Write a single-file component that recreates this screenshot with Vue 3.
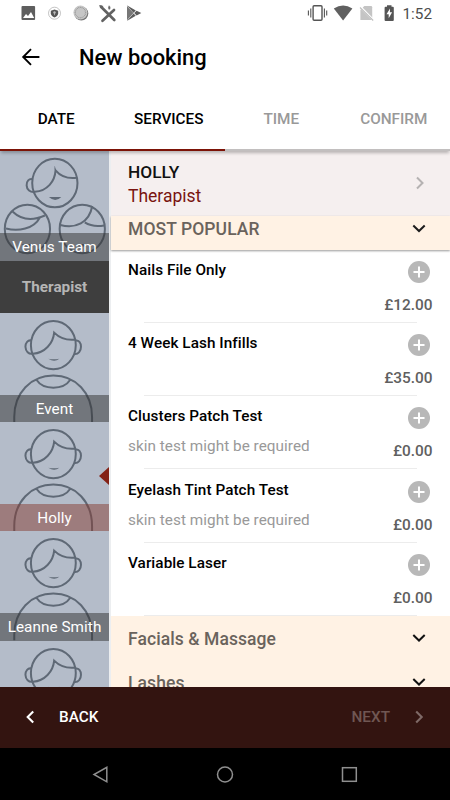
<script setup>
const tabs = [
  { label: 'DATE', done: true },
  { label: 'SERVICES', done: true },
  { label: 'TIME', done: false },
  { label: 'CONFIRM', done: false },
]

const staff = [
  { name: 'Event', selected: false },
  { name: 'Holly', selected: true },
  { name: 'Leanne Smith', selected: false },
  { name: '', selected: false },
]

const services = [
  { name: 'Nails File Only', note: '', price: '£12.00' },
  { name: '4 Week Lash Infills', note: '', price: '£35.00' },
  { name: 'Clusters Patch Test', note: 'skin test might be required', price: '£0.00' },
  { name: 'Eyelash Tint Patch Test', note: 'skin test might be required', price: '£0.00' },
  { name: 'Variable Laser', note: '', price: '£0.00' },
]

const categories = ['Facials & Massage', 'Lashes']
const rays = Array.from({ length: 20 }, (_, i) => i * 18)
</script>

<template>
  <div class="screen">
    <div class="status">
      <svg class="status-left" width="150" height="27" viewBox="0 0 150 27">
        <path d="M22.500 6h11.600a1 1 0 0 1 1 1v12a1 1 0 0 1-1 1H22.500a1 1 0 0 1-1-1V7a1 1 0 0 1 1-1z" fill="#5e5e5e" />
        <path d="M23 18l3-4 2 2 3-4 3.200 6z" fill="#fff" />
        <circle cx="54.500" cy="13.200" r="6" fill="#fff" stroke="#aaa" stroke-width=".7" />
        <path d="M54.500 9.500l3.700 1.300v2.500c0 2-1.500 3.300-3.700 4.200-2.200-.9-3.700-2.200-3.700-4.200v-2.500z" fill="#555" />
        <circle cx="54.500" cy="12.500" r="1.200" fill="#bbb" />
        <path d="M54.500 13v2.200" stroke="#bbb" stroke-width=".8" />
        <circle cx="81.300" cy="13.500" r="7" fill="#777" />
        <circle cx="80.400" cy="12.600" r="7" fill="#c6c6c6" />
        <path
          v-for="a in rays"
          :key="a"
          d="M80.400 6.800v1.200"
          stroke="#8c8c8c"
          stroke-width=".7"
          :transform="`rotate(${a} 80.400 12.600)`"
        />
        <path d="M101 6.800l13.300 13.200M114 10l-11.500 10.800" fill="none" stroke="#626262" stroke-width="2.700" stroke-linecap="round" />
        <path d="M99 5l4.500 1-2.500 2.500z" fill="#626262" />
        <path d="M109 5.200c2 1.500 2.300 3.300.2 4.800-1.700-1.300-1.500-3-.2-4.800z" fill="#686868" stroke="#fff" stroke-width=".4" />
        <path d="M127 6v14.200l6.500-7.100z" fill="#777" />
        <path d="M126.800 5.200l9 5.300-2.300 2.300zM126.800 20.900l9-5.200-2.300-2.300zM136.600 10.700l4.700 2.400-4.700 2.400-2.400-2.400z" fill="#5c5c5c" />
      </svg>
      <svg class="status-right" width="93" height="27" viewBox="307 0 93 27">
        <rect x="313.100" y="5.800" width="8.900" height="14.400" rx="1" fill="none" stroke="#555" stroke-width="1.400" />
        <path d="M308.400 10.500v5M310.800 8.500v9M324.400 8.500v9M326.700 10.500v5" stroke="#555" stroke-width="1.100" />
        <path d="M333.800 8.600q9.300-6.400 18.600 0L343.100 20.500z" fill="#606060" />
        <path d="M364.300 6H371a1.200 1.200 0 0 1 1.200 1.200V20h-11.800V10z" fill="#c4c4c4" />
        <path d="M359.500 6.200l14.200 14.300" stroke="#fff" stroke-width="2.400" />
        <path d="M360 7.500l13.200 13" stroke="#bdbdbd" stroke-width="1.100" />
        <path d="M387 5.300h4.500v1.500h1.300a1 1 0 0 1 1 1V20a1 1 0 0 1-1 1h-7.200a1 1 0 0 1-1-1V7.800a1 1 0 0 1 1-1H387z" fill="#555" />
        <path d="M390 8.500l-3.500 5.700h2.200v4l3.400-6h-2.200z" fill="#fff" />
      </svg>
      <span class="clock">1:52</span>
    </div>

    <header class="appbar">
      <svg width="20" height="20" viewBox="0 0 20 20">
        <path d="M11 2.200L3.200 10l7.800 7.800M3.200 10h16.200" fill="none" stroke="#000" stroke-width="1.900" />
      </svg>
      <h1>New booking</h1>
    </header>

    <nav class="tabs">
      <div v-for="t in tabs" :key="t.label" class="tab" :class="{ done: t.done }">{{ t.label }}</div>
    </nav>

    <main class="content">
      <aside class="sidebar">
        <div class="cell team">
          <svg class="portrait" viewBox="0 0 109.300 109.300">
            <ellipse cx="55" cy="32" rx="22.700" ry="24.300" />
            <path d="M33 28.300c-4-1.200-6.500 2-6.300 6 .2 4.500 3.500 7.200 8.300 6.500 12.500-.8 20-10.500 20.700-21.500 5.500 6.500 12.500 8.500 21 7.500" />
            <path class="mouth" d="M49 46h12.500q-6 6-12.500 0z" />
            <path d="M55.700 19.300l-1-4" stroke-width=".7" />
            <ellipse cx="27.500" cy="78" rx="22.700" ry="24.300" />
            <path d="M12.500 60.500q13 12.500 32.500 4M6 77.500c12 3.500 28 .5 34-11" />
            <ellipse cx="82.500" cy="78" rx="22.700" ry="24.300" />
            <path d="M60.500 74c15 4 29-2 32-19M85 71.500q8 5 19.500 3" />
            <path class="mouth" d="M21.500 93h12.500q-6 5.500-12.500 0zM76.500 93h12.500q-6 5.500-12.500 0z" />
          </svg>
          <div class="name">Venus Team</div>
        </div>
        <div class="group">Therapist</div>
        <div v-for="(s, i) in staff" :key="i" class="cell" :class="{ selected: s.selected }">
          <svg class="portrait" viewBox="0 0 109.300 109.300">
            <ellipse cx="53.500" cy="32" rx="22.500" ry="24.200" />
            <path d="M31.500 27.500c-3.500-1-6 2.200-6 6.200.2 4.600 3.200 7.800 7.500 7 11.800-.8 20.300-10.200 21.300-21.200 5.200 5.200 12 8 21.200 7M75.500 27.500c3.500-.8 5.700 2.300 5.700 6.200 0 4.200-2.600 7.600-6.500 7.200" />
            <path class="mouth" d="M48.500 45.700q5 1.300 11 0-5 4.300-11 0z" />
            <path d="M14.300 109.300V104C14.300 80 31 62.600 53.500 62.600S92.300 80 92.300 104v5.300M36.500 66.800c7 10.600 27 10.600 34 0" />
          </svg>
          <div v-if="s.name" class="name">{{ s.name }}</div>
          <span v-if="s.selected" class="pointer"></span>
        </div>
      </aside>

      <section class="panel">
        <div class="person">
          <div>
            <div class="person-name">HOLLY</div>
            <div class="person-role">Therapist</div>
          </div>
          <svg class="go" width="14" height="16" viewBox="0 0 14 16">
            <path d="M4 2.500L9.500 8 4 13.500" fill="none" stroke="#b5b2b2" stroke-width="2" />
          </svg>
        </div>
        <div class="category popular">
          <span>MOST POPULAR</span>
          <svg width="14" height="10" viewBox="0 0 14 10">
            <path d="M1.300 1.500L7 7l5.700-5.500" fill="none" stroke="#1c1c1c" stroke-width="2" />
          </svg>
        </div>
        <article v-for="s in services" :key="s.name" class="service">
          <div class="line">
            <span class="service-name">{{ s.name }}</span>
            <svg class="add" width="22" height="22" viewBox="0 0 22 22">
              <circle cx="11" cy="11" r="11" fill="#b8b8b8" />
              <path d="M11 5.500v11M5.500 11h11" stroke="#fff" stroke-width="2" />
            </svg>
          </div>
          <div class="line">
            <span class="note">{{ s.note }}</span>
            <span class="price">{{ s.price }}</span>
          </div>
          <div class="divider"></div>
        </article>
        <div v-for="c in categories" :key="c" class="category">
          <span>{{ c }}</span>
          <svg width="14" height="10" viewBox="0 0 14 10">
            <path d="M1.300 1L7 6.500 12.700 1" fill="none" stroke="#111" stroke-width="2" />
          </svg>
        </div>
      </section>
    </main>

    <footer class="actions">
      <div class="action">
        <svg width="14" height="16" viewBox="0 0 14 16">
          <path d="M10.200 2.500L4.700 8l5.500 5.500" fill="none" stroke="#fff" stroke-width="2.100" />
        </svg>
        <span>BACK</span>
      </div>
      <div class="action disabled">
        <span>NEXT</span>
        <svg width="14" height="16" viewBox="0 0 14 16">
          <path d="M4.200 2.500L9.700 8l-5.500 5.500" fill="none" stroke="#7f6a67" stroke-width="2.100" />
        </svg>
      </div>
    </footer>

    <div class="system">
      <svg width="450" height="53" viewBox="0 0 450 53" fill="none" stroke="#8f8f8f" stroke-width="1.500">
        <path d="M106.800 19.300v14.500L94 26.500z" />
        <circle cx="225" cy="26.500" r="7.500" />
        <rect x="342.500" y="19.700" width="13.800" height="13.600" />
      </svg>
    </div>
  </div>
</template>

<style>
body {
  margin: 0;
}
</style>

<style scoped>
.screen {
  width: 450px;
  height: 800px;
  display: flex;
  flex-direction: column;
  overflow: hidden;
  background: #fff;
  font-family: Roboto, sans-serif;
  color: #111;
}
.status {
  height: 27px;
  display: flex;
  flex: none;
}
.status-right {
  margin-left: 157px;
}
.clock {
  width: 33px;
  margin-left: 2.500px;
  font-size: 15.300px;
  line-height: 28px;
  color: #4d4d4d;
}
.appbar {
  height: 60px;
  flex: none;
  display: flex;
  align-items: center;
  padding-left: 20px;
}
.appbar h1 {
  margin: 2px 0 0 39px;
  font-size: 21.900px;
  font-weight: 500;
  line-height: 28px;
  color: #000;
}
.tabs {
  height: 64px;
  flex: none;
  display: grid;
  grid-template-columns: repeat(4, 1fr);
  position: relative;
  z-index: 1;
  box-shadow: 0 3px 3px -1px rgba(0, 0, 0, 0.25);
}
.tab {
  box-sizing: border-box;
  border-bottom: 2px solid #c2bfbf;
  text-align: center;
  line-height: 65px;
  height: 64px;
  font-size: 15.300px;
  font-weight: 500;
  color: #999;
}
.tab.done {
  color: #000;
  border-color: #7c1307;
}
.content {
  height: 535.500px;
  flex: none;
  display: flex;
  overflow: hidden;
}
.sidebar {
  width: 109px;
  flex: none;
  border-right: 2px solid #eceef0;
}
.cell {
  position: relative;
  height: 109.400px;
  display: flex;
  flex-direction: column;
  justify-content: flex-end;
  background: #b4bcc9;
}
.team {
  height: 109.600px;
}
.portrait {
  position: absolute;
  inset: 0;
  width: 109px;
  height: 109.300px;
  fill: none;
  stroke: #5f6976;
  stroke-width: 2;
}
.mouth {
  fill: #5f6976;
  stroke: none;
}
.name {
  position: relative;
  height: 27.300px;
  line-height: 28.500px;
  text-align: center;
  font-size: 15.300px;
  letter-spacing: 0.05px;
  color: #fff;
  background: rgba(48, 48, 48, 0.5);
}
.selected .name {
  background: rgba(133, 60, 50, 0.5);
}
.pointer {
  position: absolute;
  right: 0;
  top: 45px;
  border: solid transparent;
  border-width: 9.500px 10px 9.500px 0;
  border-right-color: #842216;
}
.group {
  height: 52px;
  line-height: 53px;
  text-align: center;
  font-size: 15.300px;
  font-weight: 700;
  color: #b5b5b5;
  background: #3e3e3e;
}
.panel {
  flex: 1;
  min-width: 0;
}
.person {
  box-sizing: border-box;
  height: 65px;
  display: flex;
  align-items: center;
  justify-content: space-between;
  padding: 1px 23.500px 0 17px;
  background: #f5efef;
  font-size: 17.500px;
  line-height: 24px;
}
.person-name {
  font-size: 17.300px;
  font-weight: 500;
}
.person-role {
  color: #791410;
}
.go {
  margin-bottom: 2px;
}
.category {
  box-sizing: border-box;
  height: 43.800px;
  display: flex;
  align-items: center;
  justify-content: space-between;
  padding: 2px 24px 0 17px;
  font-size: 17.500px;
  letter-spacing: 0.080px;
  font-weight: 500;
  color: #6a635c;
  background: #fff2e4;
}
.popular {
  height: 34px;
  padding-top: 0;
  padding-bottom: 9px;
  box-shadow: 0 1px 2px rgba(0, 0, 0, 0.4);
}
.service {
  box-sizing: border-box;
  height: 73.200px;
  padding: 9px 17.500px 0 17px;
  display: flex;
  flex-direction: column;
}
.line {
  display: flex;
  justify-content: space-between;
}
.service-name {
  font-size: 15.300px;
  letter-spacing: 0.060px;
  font-weight: 500;
  line-height: 23px;
  color: #000;
}
.add {
  margin: 2px 2.500px 0 0;
}
.note {
  font-size: 15.300px;
  letter-spacing: 0.040px;
  line-height: 35px;
  color: #999;
}
.price {
  font-size: 15.400px;
  font-weight: 500;
  line-height: 44px;
  height: 39px;
  color: #606060;
}
.divider {
  height: 1px;
  margin: 0 16px;
  background: #ececec;
}
.actions {
  flex: none;
  height: 61px;
  display: flex;
  justify-content: space-between;
  padding: 0 24px 0 23px;
  background: #331410;
  color: #fff;
  font-size: 15.300px;
  font-weight: 500;
}
.action {
  display: flex;
  align-items: center;
  gap: 22px;
}
.disabled {
  color: #705753;
}
.system {
  flex: none;
  height: 53px;
  background: #000;
}
</style>
